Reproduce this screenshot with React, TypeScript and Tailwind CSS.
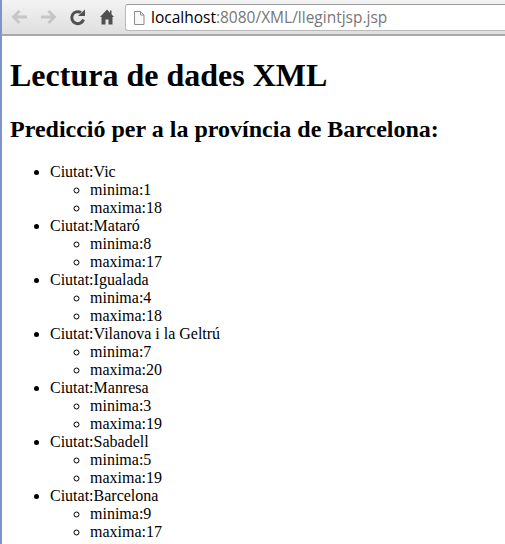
const cities = [
  { name: 'Vic', min: 1, max: 18 },
  { name: 'Mataró', min: 8, max: 17 },
  { name: 'Igualada', min: 4, max: 18 },
  { name: 'Vilanova i la Geltrú', min: 7, max: 20 },
  { name: 'Manresa', min: 3, max: 19 },
  { name: 'Sabadell', min: 5, max: 19 },
  { name: 'Barcelona', min: 9, max: 17 },
];

function Toolbar() {
  return (
    <div className="flex h-[36px] items-center border-b-2 border-b-[#a8a8a8] bg-gradient-to-b from-[#f3f3f3] to-[#dfdfdf] pl-[7px] pt-[1px]">
      <svg width="20" height="20" viewBox="0 0 20 20" fill="none" stroke="#c6c6c6" strokeWidth="2.8" className="-mt-[1px] mr-[9px]">
        <path d="M18 10H5M10.500 4l-6 6 6 6" />
      </svg>
      <svg width="20" height="20" viewBox="0 0 20 20" fill="none" stroke="#c6c6c6" strokeWidth="2.8" className="-mt-[1px] mr-[9px]">
        <path d="M3 10h13M10.500 4l6 6-6 6" />
      </svg>
      <svg width="20" height="20" viewBox="0 0 20 20" fill="none" className="-mt-[1px] mr-[9px]">
        <path d="M16.500 12.500A6 6 0 1 1 14 5.600" stroke="#505050" strokeWidth="3" />
        <path d="M11 9h7V2.500z" fill="#505050" />
      </svg>
      <svg width="20" height="20" viewBox="0 0 20 20" fill="#505050" className="-mt-[1px] mr-[9px]">
        <path d="M11 2.500L4 10h1.500v7.500h4v-5h3v5h4V10H18l-2.500-2.700V3.500h-1.500v2.200z" />
      </svg>
      <div className="flex h-[27px] flex-1 items-center rounded-l-[3px] border border-r-0 border-[#bababa] border-t-[#9c9c9c] bg-white pl-[6px]">
        <svg width="14" height="16" viewBox="0 0 14 16" fill="#f8f8f8" stroke="#8c8c8c" className="mr-[5px]">
          <path d="M2.500 1.500h6l3.500 3.500v9.500h-9.500z M8.500 1.500v3.500h3.500" />
        </svg>
        <span className="font-['Open_Sans',sans-serif] text-[15.5px] text-[#777]">
          <span className="text-black">localhost</span>:8080/XML/llegintjsp.jsp
        </span>
      </div>
    </div>
  );
}

export default function App() {
  return (
    <div className="h-[544px] overflow-hidden border-l-2 border-l-[#7f93c4] bg-white font-['Liberation_Serif',serif] text-black">
      <Toolbar />
      <div className="mx-2">
        <h1 className="mb-[22px] mt-[21px] text-[32px] font-bold leading-[37px]">Lectura de dades XML</h1>
        <h2 className="mb-[20px] text-[24px] font-bold leading-[27px]">Predicció per a la província de Barcelona:</h2>
        <ul className="list-disc pl-10 text-[16px] leading-[18px]">
          {cities.map((c) => (
            <li key={c.name}>
              Ciutat:{c.name}
              <ul className="list-[circle] pl-10">
                <li>minima:{c.min}</li>
                <li>maxima:{c.max}</li>
              </ul>
            </li>
          ))}
        </ul>
      </div>
    </div>
  );
}
